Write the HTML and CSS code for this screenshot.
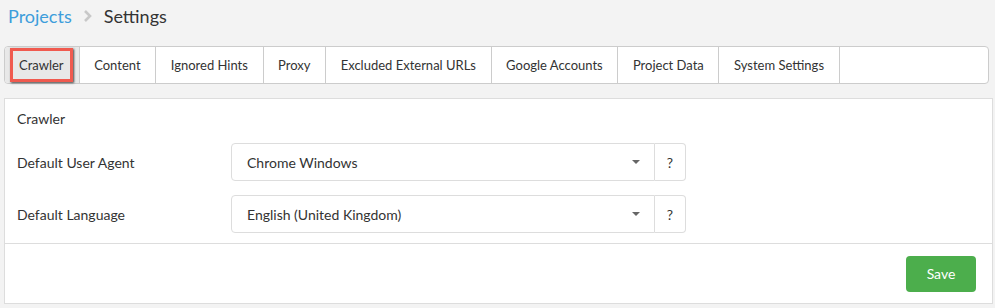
FILE: index.html
```html
<!DOCTYPE html>
<html>
<head>
<meta charset="utf-8">
<link rel="stylesheet" href="styles.css">
</head>
<body>
<div class="crumbs">
  <a class="crumb-link">Projects</a>
  <svg class="chev" width="9" height="12" viewBox="0 0 9 12"><path d="M2 1 L7 6 L2 11" fill="none" stroke="#c8c8c8" stroke-width="2.6"/></svg>
  <span class="crumb-cur">Settings</span>
</div>
<div class="tabs">
  <div class="tab active"><span class="hl">Crawler</span></div>
  <div class="tab">Content</div>
  <div class="tab">Ignored Hints</div>
  <div class="tab">Proxy</div>
  <div class="tab">Excluded External URLs</div>
  <div class="tab">Google Accounts</div>
  <div class="tab">Project Data</div>
  <div class="tab">System Settings</div>
</div>
<div class="panel">
  <div class="panel-body">
    <div class="section">Crawler</div>
    <div class="row">
      <div class="label">Default User Agent</div>
      <div class="group">
        <div class="select"><span>Chrome Windows</span><span class="caret"></span></div>
        <div class="addon">?</div>
      </div>
    </div>
    <div class="row">
      <div class="label">Default Language</div>
      <div class="group">
        <div class="select"><span>English (United Kingdom)</span><span class="caret"></span></div>
        <div class="addon">?</div>
      </div>
    </div>
  </div>
  <div class="panel-foot">
    <button class="save">Save</button>
  </div>
</div>
</body>
</html>
```
FILE: styles.css
```css
html, body { margin: 0; padding: 0; }
body {
  background: #f3f3f3;
  font-family: Lato, "Open Sans", sans-serif;
  color: #333;
  width: 995px;
  height: 308px;
  overflow: hidden;
}
.crumbs {
  display: flex;
  align-items: center;
  height: 32px;
  padding-left: 8px;
  font-size: 18px;
}
.crumb-link { color: #3d9ddb; }
.chev { margin: 0 12px 0 11px; }
.crumb-cur { color: #333; }
.tabs {
  display: flex;
  margin: 14px 6px 0 4px;
  height: 36px;
  background: #fff;
  border: 1px solid #ccc;
  border-radius: 4px;
  font-size: 13px;
}
.tab {
  display: flex;
  align-items: center;
  padding: 0 14.6px;
  border-right: 1px solid #ccc;
  color: #333;
}
.tab.active {
  background: #e8e8e8;
  padding: 0 6px 0 5px;
  border-radius: 4px 0 0 4px;
}
.hl {
  border: 3px solid #f05a4f;
  padding: 5px 6px;
  box-shadow: 1px 1px 2px #444;
  line-height: 18px;
}
.panel {
  margin: 14px 2px 0 4px;
  background: #fff;
  border: 1px solid #ddd;
  height: 206px;
  box-sizing: border-box;
  display: flex;
  flex-direction: column;
}
.panel-body {
  padding: 10px 12px 10px 12px;
  border-bottom: 1px solid #ddd;
  font-size: 14px;
}
.section { line-height: 20px; height: 20px; margin-bottom: 14px; }
.row { display: flex; align-items: center; margin-bottom: 14px; }
.row:last-child { margin-bottom: 0; }
.label { width: 214px; }
.group { display: flex; height: 38px; }
.select {
  width: 424px;
  box-sizing: border-box;
  border: 1px solid #ddd;
  border-radius: 4px 0 0 4px;
  display: flex;
  align-items: center;
  justify-content: space-between;
  padding: 0 14px 0 15px;
  color: #333;
}
.caret {
  width: 0; height: 0;
  border-left: 4px solid transparent;
  border-right: 4px solid transparent;
  border-top: 4px solid #666;
}
.addon {
  width: 31px;
  box-sizing: border-box;
  border: 1px solid #ddd;
  border-left: none;
  border-radius: 0 4px 4px 0;
  display: flex;
  align-items: center;
  justify-content: center;
  color: #333;
}
.panel-foot {
  flex: 1;
  display: flex;
  justify-content: flex-end;
  align-items: center;
  padding-right: 16px;
}
.save {
  background: #4cae4c;
  color: #fff;
  border: none;
  border-radius: 4px;
  width: 70px;
  height: 36px;
  font-family: Lato, sans-serif;
  font-size: 14px;
}
```
